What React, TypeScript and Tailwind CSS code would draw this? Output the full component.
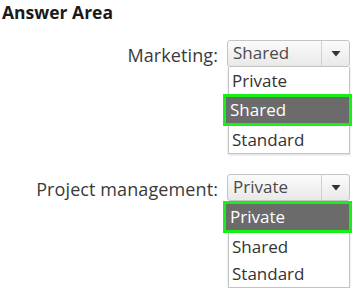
const font = { fontFamily: '"Open Sans", "Noto Sans", sans-serif' };

type Props = {
  label: string;
  value: string;
  options: string[];
  selected: string;
};

function Dropdown({ label, value, options, selected }: Props) {
  return (
    <div className="flex items-start">
      <div className="w-[227px] shrink-0 pr-[9px] pt-[4px] text-right text-[18px] leading-[22px] tracking-[0.1px] text-[#3a3a3a]">
        {label}
      </div>
      <div className="w-[123px] shrink-0">
        {/* closed select */}
        <div className="flex h-[27px] items-stretch rounded-[3px] border border-[#c4c4c4] bg-gradient-to-b from-[#fbfbfb] to-[#e9e9e9]">
          <div className="flex-1 pl-[5px] text-[17px] leading-[24px] text-[#4a4a4a]">{value}</div>
          <div className="flex w-[28px] items-center justify-center border-l border-[#d0d0d0]">
            <svg width="10" height="6" viewBox="0 0 10 6">
              <path d="M0.5 0h9L5 5.5z" fill="#333" />
            </svg>
          </div>
        </div>
        {/* open list */}
        <div className="ml-[1px] w-[122px] border border-t-0 border-[#c4c4c4] bg-white shadow-[0_1px_2px_rgba(0,0,0,0.15)]">
          {options.map((o) =>
            o === selected ? (
              <div
                key={o}
                className="-ml-[6px] -mr-[3px] border-[3px] border-[#16f016] bg-[#6b6b6b] pl-[4px] text-[17px] leading-[26px] text-white"
              >
                {o}
              </div>
            ) : (
              <div key={o} className="pl-[3px] text-[17px] leading-[27px] text-[#333]">
                {o}
              </div>
            )
          )}
        </div>
      </div>
    </div>
  );
}

export default function App() {
  return (
    <div className="h-[288px] w-[356px] overflow-hidden bg-white" style={font}>
      <div className="pl-[2px] text-[17.5px] font-bold leading-[24px] text-[#1a1a1a]">Answer Area</div>
      <div className="mt-[16px]">
        <Dropdown
          label="Marketing:"
          value="Shared"
          options={['Private', 'Shared', 'Standard']}
          selected="Shared"
        />
      </div>
      <div className="mt-[20px]">
        <Dropdown
          label="Project management:"
          value="Private"
          options={['Private', 'Shared', 'Standard']}
          selected="Private"
        />
      </div>
    </div>
  );
}
